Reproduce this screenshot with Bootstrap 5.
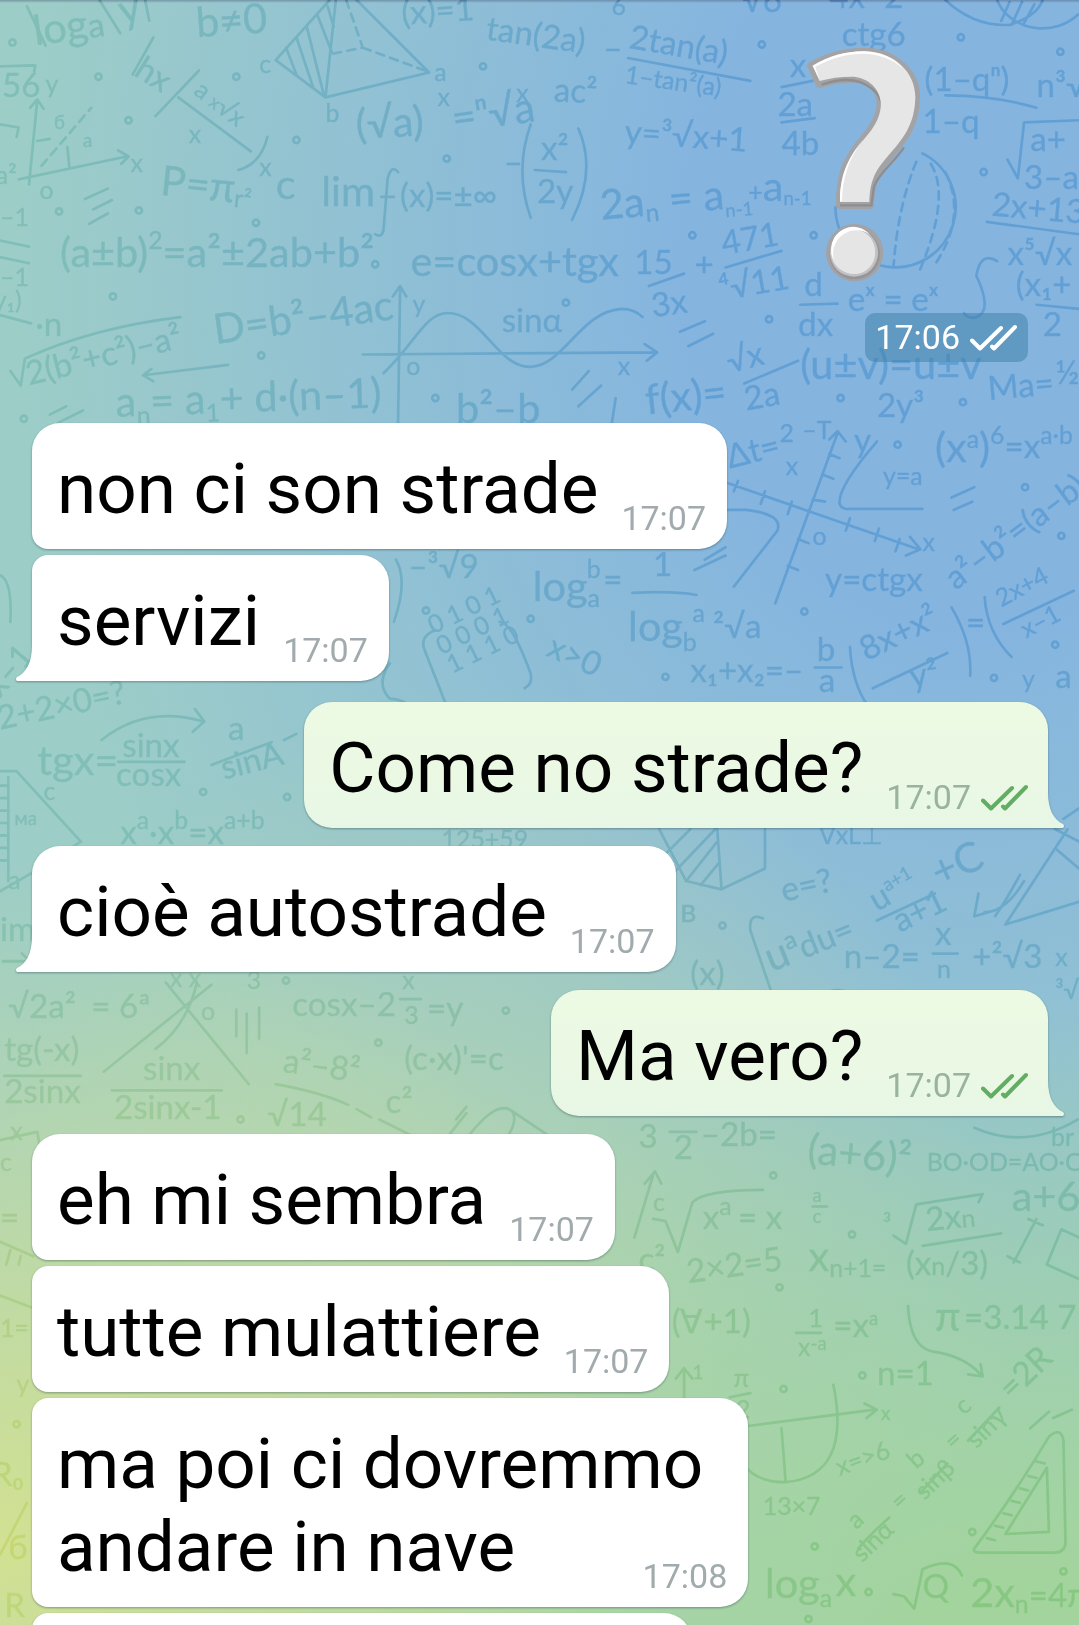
<!DOCTYPE html>
<html lang="it">
<head>
<meta charset="utf-8">
<meta name="viewport" content="width=device-width, initial-scale=1">
<title>Chat</title>
<link href="https://cdn.jsdelivr.net/npm/bootstrap@5.3.0/dist/css/bootstrap.min.css" rel="stylesheet">
<script src="https://cdn.jsdelivr.net/npm/bootstrap@5.3.0/dist/js/bootstrap.bundle.min.js"></script>
<style>
body { font-family: Roboto, "Liberation Sans", sans-serif; color: #000; }
.chat {
  isolation: isolate;
  background:
    linear-gradient(rgba(70,90,120,.45), rgba(70,90,120,0) 3px),
    radial-gradient(ellipse 62% 42% at 0% 95%, rgba(210,225,146,1), rgba(210,225,146,0)),
    radial-gradient(ellipse 80% 42% at 96% 103%, rgba(163,212,158,1) 15%, rgba(163,212,158,0)),
    radial-gradient(ellipse 50% 46% at 45% 88%, rgba(188,217,163,.85), rgba(188,217,163,0)),
    radial-gradient(ellipse 88% 74% at 90% 16%, #85b5df 30%, rgba(133,181,223,0)),
    #9dcdc7;
}
.doodles { z-index: 0; mix-blend-mode: overlay; opacity: .29; pointer-events: none; }
.doodles text { font-family: Lato, "Open Sans", sans-serif; fill: #000; stroke: #000; stroke-width: .4; }
.doodles path, .doodles circle { fill: none; stroke: #000; stroke-width: 2.6; stroke-linecap: round; stroke-linejoin: round; }
.t1 { font-size: 40px; } .t2 { font-size: 32px; } .t3 { font-size: 24px; } .t4 { font-size: 18px; }
.thread { z-index: 1; padding: 30px 31px 0 32px; }
.sticker-msg { margin: 0 20px 61px 0; }
.sticker { width: 248px; height: 283px; }
.time-badge { background: rgba(60,125,165,.5); border-radius: 10px; padding: 4px 10px 5px; color: #fff; }
.bubble { background: #fff; border-radius: 28px; padding: 24px 21px 19px 25px; filter: drop-shadow(0 1px 1px rgba(20,50,60,.4)); max-width: 90%; }
.bubble-out { background: linear-gradient(#edfae3, #e8f7e5); padding-right: 19px; color: #000; }
.join-top { border-top-left-radius: 16px; }
.join-bottom { border-bottom-left-radius: 16px; }
.tail-in { border-bottom-left-radius: 0; }
.tail-out { border-bottom-right-radius: 0; }
.tail { width: 17px; height: 36px; bottom: 0; }
.tail-in .tail { right: 100%; margin-right: -1px; }
.tail-out .tail { left: 100%; margin-left: -1px; }
.words { font-size: 71px; line-height: 83px; }
.stamp { font-size: 34px; line-height: 40px; color: #a1aaad; margin-bottom: -8px; }
.bubble-out .stamp { color: #9ab39c; }
.time-badge .stamp { color: #fff; margin: 0; }
.ticks { width: 48px; height: 27px; fill: none; stroke: #62ad63; stroke-width: 4; stroke-linecap: round; stroke-linejoin: round; }
.time-badge .ticks { stroke: #fff; }
.gap-text { column-gap: 23px; }
.gap-tick { column-gap: 10px; }
.stacked > * { grid-area: 1 / 1; }
.stacked .words { padding-right: 24px; }
.g-near { margin-bottom: 6px; } .g-far { margin-bottom: 18px; } .g-turn { margin-bottom: 21px; }
.next-msg { width: 65%; min-height: 126px; }
</style>
</head>
<body>
<main class="chat position-relative vh-100 overflow-hidden">
<svg class="doodles position-absolute top-0 start-0 w-100 h-100" viewBox="0 0 1041 1568" preserveAspectRatio="xMidYMin slice" aria-hidden="true">
  <!-- formulas -->
  <text class="t1" transform="translate(34 44) rotate(-8)">log<tspan class="t2">a</tspan></text>
  <text class="t1" transform="translate(118 24) rotate(-14)">y</text>
  <text class="t1" transform="translate(190 36) rotate(-4)">b≠0</text>
  <text class="t2" x="2" y="94">56</text><text class="t3" x="44" y="90">y</text>
  <text class="t2" transform="translate(128 72) rotate(32)">hx</text>
  <text class="t3" transform="translate(186 90) rotate(38)">a <tspan class="t4">x</tspan>√x</text>
  <text class="t3" x="182" y="138">x</text>
  <text class="t3" x="250" y="70">c</text><text class="t3" x="314" y="118">b</text><text class="t3" x="419" y="78">a</text>
  <text class="t4" x="52" y="124">б</text><text class="t4" x="80" y="142">a</text><text class="t3" x="126" y="166">x</text><text class="t3" x="38" y="192">o</text>
  <text class="t3" x="-4" y="178">a²</text>
  <text class="t2" transform="translate(388 24) rotate(-4)">(x)=1</text>
  <text class="t2" transform="translate(468 38) rotate(8)">tan(2a)</text><text class="t2" x="582" y="58">–</text>
  <text class="t2" transform="translate(606 46) rotate(10)">2tan(a)</text>
  <text class="t3" transform="translate(602 80) rotate(8)">1–tan²(a)</text>
  <text class="t2" transform="translate(534 98) rotate(2)">ac²</text>
  <text class="t1" transform="translate(344 134) rotate(-3)">(√a)</text><text class="t3" x="422" y="102">x</text>
  <text class="t1" transform="translate(438 128) rotate(-8)">=ⁿ√a</text><text class="t3" x="494" y="98" dx="4">x</text>
  <text class="t2" transform="translate(602 138) rotate(4)">y=³√x+1</text>
  <text class="t2" x="486" y="168">–</text><text class="t2" x="522" y="154">x²</text><text class="t2" x="518" y="196">2y</text>
  <text class="t1" transform="translate(154 188) rotate(6)">P=π<tspan class="t3" dy="4">r²</tspan></text>
  <text class="t3" x="250" y="170">x</text><text class="t1" x="266" y="192">c</text>
  <text class="t1" x="310" y="199">lim</text><text class="t2" x="386" y="200">(x)=±∞</text>
  <text class="t1" transform="translate(580 212) rotate(-5)">2a<tspan class="t3" dy="6">n</tspan><tspan dy="-6"> = a</tspan><tspan class="t4" dy="8">n-1</tspan></text>
  <text class="t1" transform="translate(722 194)"><tspan class="t3">+</tspan>a<tspan class="t4" dy="4">n-1</tspan></text>
  <text class="t1" x="58" y="258">(a±b)<tspan class="t3" dy="-18">2</tspan><tspan dy="18">=a²±2ab+b²</tspan></text>
  <text class="t1" x="396" y="266">e=cosx+tgx</text>
  <text class="t1" transform="translate(208 332) rotate(-8)">D=b²–4ac</text>
  <text class="t2" transform="translate(28 372) rotate(-14)">2(b²+c²)–a²</text>
  <text class="t3" x="0" y="218">–1</text><text class="t3" x="0" y="276">–1</text><text class="t3" x="-6" y="298">y₁)</text><text class="t2" x="34" y="324">·n</text>
  <text class="t1" transform="translate(112 402) rotate(-2)">a<tspan class="t3" dy="8">n</tspan><tspan dy="-8">= a</tspan><tspan class="t3" dy="8">1</tspan><tspan dy="-8">+ d·(n–1)</tspan></text>
  <text class="t3" x="398" y="302">y</text><text class="t3" x="392" y="362">o</text><text class="t3" x="596" y="362">x</text>
  <text class="t2" x="484" y="320">sinα</text>
  <text class="t2" x="612" y="264">15</text><text class="t2" transform="translate(630 306) rotate(-8)">3x</text><text class="t2" x="670" y="266">+</text>
  <text class="t2" transform="translate(698 246) rotate(-10)">471</text><text class="t2" transform="translate(696 290) rotate(-10)">⁴√11</text>
  <text class="t1" x="440" y="408">b²–b</text>
  <text class="t1" transform="translate(624 400) rotate(-6)">f(x)=</text>
  <text class="t2" transform="translate(704 360) rotate(-14)">√x</text><text class="t2" transform="translate(720 396) rotate(-10)">2a</text>
  <text class="t2" x="762" y="74">x</text><text class="t2" x="750" y="112">2a</text><text class="t2" x="754" y="150">4b</text>
  <text class="t2" x="812" y="44">ctg6</text>
  <text class="t3" x="590" y="14">6</text><text class="t2" x="716" y="12">√6</text><text class="t2" x="800" y="8">4x–2</text>
  <text class="t2" x="892" y="88">(1–qⁿ)</text><text class="t2" x="890" y="128">1–q</text><text class="t2" x="1000" y="94">n³√</text>
  <text class="t2" x="994" y="146">a+</text><text class="t2" x="988" y="182">3–a</text>
  <text class="t2" transform="translate(956 208) rotate(5)">2x+13</text><text class="t2" x="972" y="256">x⁵√x</text><text class="t2" x="980" y="286">(x₁+</text><text class="t2" x="1006" y="324">2</text>
  <text class="t2" x="776" y="286">d</text><text class="t2" x="770" y="324">dx</text><text class="t2" x="818" y="300">eˣ = eˣ</text>
  <text class="t1" x="772" y="366">(u±v)=u±v</text><text class="t2" x="846" y="402">2y³</text>
  <text class="t2" transform="translate(954 386) rotate(-5)">Ma=</text><text class="t2" x="1018" y="370">½</text>
  <text class="t2" transform="translate(704 452) rotate(-14)">Δt=</text><text class="t3" x="752" y="426">2</text><text class="t3" x="758" y="458">x</text><text class="t3" x="774" y="424">–T</text>
  <text class="t2" x="824" y="436">y</text><text class="t3" x="784" y="526">o</text><text class="t3" x="890" y="532">x</text>
  <text class="t3" x="852" y="468">y=a</text><text class="t1" x="902" y="446">(x<tspan class="t3" dy="-14">a</tspan><tspan dy="14">)</tspan><tspan class="t3" dy="-18">6</tspan><tspan class="t2" dy="14">=x</tspan><tspan class="t3" dy="-14">a·b</tspan></text>
  <text class="t2" transform="translate(922 570) rotate(-37)">a²–b²=(a–b)</text>
  <text class="t2" x="796" y="570">y=ctgx</text>
  <text class="t1" x="514" y="580">log<tspan class="t3" dy="6">a</tspan></text><text class="t2" x="578" y="570" dx="4">=</text><text class="t3" x="562" y="558" dx="4">b</text><text class="t2" x="630" y="556">1</text>
  <text class="t1" x="606" y="618">log<tspan class="t3" dy="10">b</tspan></text><text class="t3" x="666" y="600" dx="2">a</text><text class="t2" x="688" y="616">²√a</text>
  <text class="t2" transform="translate(526 632) rotate(24)">x&gt;0</text><text class="t2" x="666" y="658">x₁+x₂=–</text><text class="t2" x="788" y="638">b</text><text class="t2" x="790" y="668">a</text>
  <text class="t2" transform="translate(836 638) rotate(-26)">8x+x²</text><text class="t2" transform="translate(880 664) rotate(-10)">y²</text><text class="t2" x="932" y="612">=</text>
  <text class="t3" transform="translate(966 586) rotate(-28)">2x+4</text><text class="t3" transform="translate(990 616) rotate(-28)">x–1</text><text class="t3" x="986" y="664">y</text><text class="t2" x="1018" y="664">a</text>
  <text class="t2" x="394" y="558">–³√9</text>
  <text class="t3" transform="translate(418 612) rotate(-26)">0 1 0 1</text><text class="t3" transform="translate(426 632) rotate(-26)">0 0 0 1</text><text class="t3" transform="translate(436 650) rotate(-26)">1 1 1 0</text>
  <text class="t2" transform="translate(0 704) rotate(-12)">2+2×0=?</text><text class="t2" transform="translate(0 674) rotate(-50)">x–1</text>
  <text class="t1" x="36" y="748">tgx=</text><text class="t2" x="118" y="730">sinx</text><text class="t2" x="112" y="758">cosx</text>
  <text class="t2" x="220" y="714">a</text><text class="t2" transform="translate(216 752) rotate(-14)">sinA</text>
  <text class="t2" x="116" y="814">x<tspan class="t3" dy="-14">a</tspan><tspan dy="14">·x</tspan><tspan class="t3" dy="-14">b</tspan><tspan dy="14">=x</tspan><tspan class="t3" dy="-14">a+b</tspan></text>
  <text class="t4" x="14" y="796">ма</text><text class="t3" x="8" y="858">a</text><text class="t2" x="0" y="908">im</text><text class="t2" x="0" y="938">→</text><text class="t3" x="42" y="772">c</text>
  <text class="t3" x="426" y="818">125+59</text><text class="t3" x="790" y="814">∇xL⊥</text>
  <text class="t2" x="656" y="890">в</text><text class="t2" transform="translate(756 870) rotate(-12)">e=?</text>
  <text class="t1" transform="translate(744 938) rotate(-22)">u<tspan class="t3" dy="-14">a</tspan><tspan class="t2" dy="14">du=</tspan></text><text class="t2" transform="translate(846 880) rotate(-30)">u<tspan class="t4" dy="-12">a+1</tspan></text><text class="t2" transform="translate(868 900) rotate(-26)">a+1</text><text class="t1" transform="translate(906 856) rotate(-24)">+C</text>
  <text class="t2" x="814" y="934">n–2=</text><text class="t2" x="902" y="912">x</text><text class="t3" x="904" y="944">n</text><text class="t2" x="938" y="934">+²√3</text>
  <text class="t2" x="666" y="950">(x)</text><text class="t3" x="1018" y="932">x</text><text class="t3" x="1018" y="964">³√</text>
  <text class="t2" x="8" y="982">√2a²</text><text class="t2" x="84" y="982" dx="4">= 6ª</text>
  <text class="t3" x="194" y="984">o</text><text class="t3" x="238" y="954">3</text><text class="t3" x="164" y="952">x x</text>
  <text class="t2" x="282" y="980">cosx–2</text><text class="t3" x="388" y="954">x</text><text class="t3" x="390" y="988">3</text><text class="t2" x="412" y="984">=y</text>
  <text class="t2" x="4" y="1024">tg(-x)</text><text class="t2" x="4" y="1064">2sinx</text><text class="t2" x="138" y="1042">sinx</text><text class="t2" x="110" y="1080">2sinx-1</text>
  <text class="t2" transform="translate(272 1034) rotate(8)">a²–8²</text><text class="t2" x="390" y="1032">(c·x)'=c</text><text class="t2" x="258" y="1086">√14</text><text class="t2" x="372" y="1074">c²</text>
  <text class="t3" x="10" y="1100">x</text><text class="t3" x="0" y="1130">c</text><text class="t2" x="0" y="1186">=</text>
  <text class="t2" x="616" y="1108">3</text><text class="t2" x="646" y="1118" dx="4">2</text><text class="t2" x="676" y="1106">–2b=</text><text class="t1" transform="translate(778 1122) rotate(6)">(a+6)²</text><text class="t3" x="894" y="1130">BO·OD=AO·O</text><text class="t3" x="1014" y="1106">br</text>
  <text class="t3" x="630" y="1168">c</text><text class="t2" x="678" y="1186">x<tspan class="t3" dy="-14">a </tspan><tspan dy="14">= x</tspan></text><text class="t4" x="784" y="1160">a</text><text class="t4" x="784" y="1180">c</text>
  <text class="t3" x="852" y="1190">³</text><text class="t2" transform="translate(894 1188) rotate(-6)">2x<tspan class="t3">n</tspan></text><text class="t2" x="874" y="1230">(x<tspan class="t3">n</tspan>/3)</text><text class="t1" x="976" y="1168">a+6</text>
  <text class="t2" x="616" y="1226">c²</text><text class="t2" transform="translate(664 1238) rotate(-8)">2×2=5</text><text class="t1" x="780" y="1226">x<tspan class="t3" dy="6">n+1=</tspan></text>
  <text class="t2" x="648" y="1286">(∀+1)</text><text class="t3" x="780" y="1280">1</text><text class="t3" x="770" y="1308">x<tspan class="t4" dy="-6">-a</tspan></text><text class="t2" x="804" y="1290">=x<tspan class="t4" dy="-12">a</tspan></text>
  <text class="t1" x="902" y="1284">π</text><text class="t2" x="930" y="1282">=3.14 7–</text><text class="t2" x="846" y="1336">n=1</text>
  <text class="t3" x="708" y="1338">π</text><text class="t3" x="710" y="1368">2</text><text class="t4" x="850" y="1370">x</text><text class="t4" x="668" y="1330">1</text>
  <text class="t3" transform="translate(810 1424) rotate(-20)">x=&gt;6</text><text class="t3" x="736" y="1462">13×7</text>
  <text class="t3" transform="translate(826 1476) rotate(-42)">a</text><text class="t3" transform="translate(832 1508) rotate(-44)">sinα</text><text class="t3" transform="translate(868 1458) rotate(-42)">=</text><text class="t3" transform="translate(884 1418) rotate(-42)">b</text><text class="t3" transform="translate(892 1448) rotate(-44)">sinβ</text><text class="t3" transform="translate(920 1400) rotate(-42)">=</text><text class="t3" transform="translate(930 1366) rotate(-42)">c</text><text class="t3" transform="translate(942 1398) rotate(-44)">sinγ</text><text class="t2" transform="translate(976 1352) rotate(-44)">=2R</text>
  <text class="t1" x="738" y="1542">log<tspan class="t3" dy="8">a</tspan></text><text class="t1" x="802" y="1540" dx="4">x</text><text class="t2" x="890" y="1542">Q</text><text class="t1" x="936" y="1550">2x<tspan class="t3" dy="6">n</tspan><tspan class="t2" dy="-6">=4π</tspan></text>
  <text class="t3" x="0" y="1290">1=</text><text class="t3" x="16" y="1344">y</text><text class="t2" x="-8" y="1434">R₀</text><text class="t2" x="8" y="1504">б</text><text class="t2" x="4" y="1560">R</text>
  <!-- rules, axes and figures -->
  <path d="M26 6L44 44M96 0L116 32M140 0L144 20M0 64L34 63L33 69M28 178L36 96M29 104L36 96L42 105M18 173L122 151M114 145L124 151L117 158M36 136L48 134M65 142L67 162"/>
  <path d="M148 36L128 72M192 68L150 112M172 94L242 146M258 132Q252 158 230 164M0 120L18 123L16 132M82 192L104 182M90 202L108 193M86 216L104 206M48 400L64 392M56 408L80 396"/>
  <path d="M318 0L266 58L314 94L414 70L344 0M314 94L324 0M276 46L286 72M286 36L302 84M296 26L312 90M306 14L320 50M316 6L322 26"/>
  <path stroke-dasharray="8 6" d="M334 0L350 46L320 52M350 46L410 68M40 160L88 104"/>
  <path d="M606 56L724 78M754 84L784 78M754 118L786 114M516 164L546 166M512 120Q496 165 512 210M558 124Q576 165 552 212M384 166Q378 158 374 172L370 222Q368 230 362 226M368 190H380"/>
  <path d="M0 232L28 238M0 248L28 254M0 304L30 312M10 358L20 372L24 346Q90 316 174 306M220 352L138 362M146 356L138 362L148 368M350 342L632 340M622 332L634 340L624 348M384 410L386 278M379 286L386 276L392 286M370 360C400 332 410 302 432 302C465 302 480 355 512 354C545 352 560 300 600 298Q612 298 620 306"/>
  <path d="M626 276L660 264M700 258L754 242M552 376L568 358M558 392L580 372M590 410L594 384M656 320L680 310M664 334L688 322M718 370L770 348M772 294L808 293M1000 294L1041 298M912 92Q960 92 1000 104M972 154L982 172L988 118L1041 116M952 214L1041 226"/>
  <path d="M962 252Q946 242 942 266Q958 300 942 306Q934 308 930 302M890 148A58 58 0 1 1 806 200M912 0Q940 26 974 24Q1000 16 1006 0M962 0A46 40 0 0 0 1040 14M966 20L974 2M976 24L986 2M988 22L998 4"/>
  <path stroke-dasharray="8 6" d="M884 156Q866 200 862 258M898 158Q918 190 886 264M912 166Q934 210 900 258"/>
  <path d="M702 466L886 530M878 518L888 530L874 536M748 582L808 418M800 424L808 416L816 426M712 464L708 474M738 474L734 486M764 484L760 496M820 500L816 512M848 510L844 522M868 520L864 532M800 438L810 442M794 458L804 462M784 482L796 484M770 520L780 524M760 546L770 550"/>
  <path d="M846 426Q808 470 810 486Q812 492 820 491H890M700 492H720Q756 496 750 512L708 566M918 480L940 470M920 492L938 484M670 550L700 536M680 540L700 528M610 572Q650 570 672 574M786 644L812 644M820 624Q822 660 838 682M842 664L914 630M918 586Q938 620 936 652M950 576Q952 610 976 634M968 602L1036 570"/>
  <path d="M420 608Q404 614 410 628L432 684M482 600Q494 600 512 650Q514 660 506 664M382 540Q394 560 380 600M376 640Q362 660 376 674Q400 676 394 690M0 555Q12 560 10 600M98 714Q140 680 196 696M188 684L197 696L186 706M114 735L178 735M204 738L262 716M274 714L286 708M0 744L16 744L78 812L38 838L0 860M8 750V850"/>
  <path d="M0 758H8M0 770H8M0 782H8M0 794H8M0 806H8M0 818H8M0 830H8M636 800L662 850L696 858L738 838V800M692 800L696 856M640 826L666 800M650 842L690 800M662 850L692 812M676 854L694 832"/>
  <path d="M1030 800L970 892L1041 870M1020 820L1041 838M1018 800L1041 812M984 844Q970 870 960 884M988 850Q970 880 950 880M944 862L940 884L954 880M846 888L902 862M900 920H924M736 886Q722 880 724 898L748 968M790 966Q800 950 820 958L840 962M1026 790L1041 780"/>
  <path d="M100 1034L204 950M160 948L240 1046M190 948Q180 990 150 1012M228 974V1000M238 978V1016M250 972V1002M4 1038H78M108 1052H214M266 1046Q310 1054 336 1066M344 1070L358 1078M366 1080L398 1096M386 964H406M434 1094L450 1074M440 1080L450 1068M452 1096Q480 1060 494 1072Q500 1080 490 1096M494 1072L530 1096"/>
  <path d="M646 1092H672M630 1176L642 1178L654 1208L668 1160Q680 1148 736 1148M784 1164H798M612 1194L630 1134M622 1142L632 1130L638 1142M862 1192L874 1200L884 1162L948 1152L944 1160M890 1202L966 1190M940 1088Q990 1110 1040 1080"/>
  <path d="M876 1260Q878 1300 900 1304Q930 1308 946 1326M934 1326L948 1328L946 1316M768 1286H792M704 1348L724 1344M660 1350V1322M652 1330L660 1320L668 1330M720 1376L844 1360M834 1354L846 1360L836 1368M804 1336Q822 1424 758 1430Q732 1430 720 1416M754 1378L758 1430M828 1494Q840 1480 858 1464M888 1440L914 1412M934 1390L964 1358M1016 1368L1034 1360M994 1378L1012 1362"/>
  <path d="M940 1494Q980 1440 1012 1386Q1024 1376 1026 1390L1028 1490Q1026 1498 1018 1498H946Q938 1498 940 1494ZM970 1480L1010 1416L1012 1478ZM952 1484L960 1486M960 1472L968 1474M968 1460L976 1462M976 1448L984 1450M984 1436L992 1438M992 1424L1000 1426M1000 1410L1008 1412M978 1218L1000 1176M992 1176L1006 1182M972 1212L984 1218M1010 1220L1024 1186L1041 1194M1010 1220L1041 1234M862 1538L872 1540L882 1552L890 1514Q920 1500 928 1520"/>
  <path d="M0 1198L32 1212M0 1250L32 1262M10 1206L6 1220M20 1212L18 1220M0 1100L36 1092L38 1104M0 1500L26 1450"/>
  <g>
    <circle cx="12" cy="41" r="3"/><circle cx="95" cy="74" r="3"/><circle cx="124" cy="116" r="3"/><circle cx="228" cy="74" r="3"/><circle cx="286" cy="135" r="3"/><circle cx="466" cy="64" r="3"/><circle cx="57" cy="204" r="3"/><circle cx="134" cy="203" r="3"/><circle cx="247" cy="215" r="3"/><circle cx="431" cy="153" r="3"/><circle cx="362" cy="255" r="3"/><circle cx="109" cy="286" r="3"/><circle cx="252" cy="343" r="3"/><circle cx="23" cy="404" r="3"/><circle cx="420" cy="384" r="3"/><circle cx="735" cy="43" r="3"/><circle cx="927" cy="36" r="3"/><circle cx="1023" cy="50" r="3"/><circle cx="949" cy="166" r="3"/><circle cx="668" cy="227" r="3"/><circle cx="785" cy="227" r="3"/><circle cx="546" cy="292" r="3"/><circle cx="742" cy="308" r="3"/><circle cx="811" cy="384" r="3"/><circle cx="929" cy="388" r="3"/><circle cx="866" cy="429" r="3"/><circle cx="989" cy="470" r="3"/><circle cx="1024" cy="517" r="3"/><circle cx="776" cy="590" r="3"/><circle cx="642" cy="653" r="3"/><circle cx="959" cy="654" r="3"/><circle cx="1018" cy="622" r="3"/><circle cx="512" cy="597" r="3"/><circle cx="411" cy="589" r="3"/><circle cx="196" cy="764" r="3"/><circle cx="277" cy="769" r="3"/><circle cx="697" cy="893" r="3"/><circle cx="276" cy="946" r="3"/><circle cx="488" cy="975" r="3"/><circle cx="365" cy="1006" r="3"/><circle cx="232" cy="1080" r="3"/><circle cx="746" cy="1134" r="3"/><circle cx="822" cy="1191" r="3"/><circle cx="752" cy="1242" r="3"/><circle cx="832" cy="1327" r="3"/><circle cx="756" cy="1340" r="3"/><circle cx="938" cy="1478" r="3"/><circle cx="786" cy="1492" r="3"/><circle cx="838" cy="1536" r="3"/><circle cx="1026" cy="1516" r="3"/><circle cx="16" cy="1374" r="3"/><circle cx="780" cy="1562" r="3"/>
  </g>
</svg>

<section class="thread position-relative d-flex flex-column align-items-start">
  <article class="sticker-msg align-self-end d-flex flex-column align-items-end">
    <svg class="sticker" viewBox="0 0 744 849" role="img" aria-label="Punto interrogativo">
      <g fill="#a3a3a6" stroke="#a3a3a6" stroke-width="24" stroke-linejoin="round">
        <path d="M94 107C145 77 200 65 255 65C345 66 408 130 408 200C408 285 370 330 325 382C285 428 272 460 270 525H180C178 440 198 390 248 330C288 285 303 250 302 215C297 168 255 146 215 146C180 146 150 152 119 162Z"/>
        <circle cx="224" cy="668" r="74"/>
      </g>
      <path d="M125 164C165 150 208 146 240 156C300 180 318 222 298 264M180 526H274L282 470C296 430 340 400 372 352" fill="none" stroke="#8e8e91" stroke-width="7"/>
      <path d="M98 107C150 77 200 63 255 64C345 66 405 128 406 200C405 285 368 328 322 380C283 425 270 455 268 516H180C180 440 200 390 250 330C290 285 305 250 302 215C297 168 255 140 215 140C180 140 150 144 119 153Z" fill="#e6e6e7"/>
      <path d="M119 151L98 107C150 77 200 63 255 64C310 67 345 88 370 116C336 86 290 70 245 71C195 73 155 84 106 110ZM180 514C180 440 200 388 250 328C203 390 187 450 186 514Z" fill="#fff"/>
      <circle cx="224" cy="672" r="76" fill="#969698"/>
      <circle cx="222" cy="668" r="72" fill="#c2c2c4"/>
      <circle cx="219" cy="664" r="66" fill="#e6e6e7"/>
      <path d="M154 664A66 66 0 0 1 270 614A70 70 0 0 0 162 690Q154 680 154 664Z" fill="#fff"/>
      <circle cx="223" cy="670" r="62" fill="#e5e5e6"/>
    </svg>
    <div class="time-badge d-flex align-items-center gap-tick">
      <time class="stamp">17:06</time>
      <svg class="ticks" viewBox="0 0 48 27" role="img" aria-label="Letto"><path d="M2 16.5L10 24.5L31 4M22 22.5L24 24.5L45 3"/></svg>
    </div>
  </article>

  <article class="bubble join-bottom g-near d-flex align-items-end gap-text"><span class="words">non ci son strade</span><time class="stamp">17:07</time></article>
  <article class="bubble join-top tail-in g-turn position-relative d-flex align-items-end gap-text"><span class="words">servizi</span><time class="stamp">17:07</time>
    <svg class="tail position-absolute" viewBox="0 0 17 36" aria-hidden="true"><path d="M17 0H16C16 18 10 28 1 32Q-1 34 1 36H17Z" fill="#fff"/></svg></article>
  <article class="bubble bubble-out tail-out g-far align-self-end position-relative d-flex align-items-end gap-text"><span class="words">Come no strade?</span>
    <span class="stamp d-flex align-items-center gap-tick"><time>17:07</time><svg class="ticks" viewBox="0 0 48 27" role="img" aria-label="Letto"><path d="M2 16.5L10 24.5L31 4M22 22.5L24 24.5L45 3"/></svg></span>
    <svg class="tail position-absolute" viewBox="0 0 17 36" aria-hidden="true"><path d="M0 0H1C1 18 7 28 16 32Q18 34 16 36H0Z" fill="#e8f7e5"/></svg></article>
  <article class="bubble tail-in g-far position-relative d-flex align-items-end gap-text"><span class="words">cioè autostrade</span><time class="stamp">17:07</time>
    <svg class="tail position-absolute" viewBox="0 0 17 36" aria-hidden="true"><path d="M17 0H16C16 18 10 28 1 32Q-1 34 1 36H17Z" fill="#fff"/></svg></article>
  <article class="bubble bubble-out tail-out g-far align-self-end position-relative d-flex align-items-end gap-text"><span class="words">Ma vero?</span>
    <span class="stamp d-flex align-items-center gap-tick"><time>17:07</time><svg class="ticks" viewBox="0 0 48 27" role="img" aria-label="Letto"><path d="M2 16.5L10 24.5L31 4M22 22.5L24 24.5L45 3"/></svg></span>
    <svg class="tail position-absolute" viewBox="0 0 17 36" aria-hidden="true"><path d="M0 0H1C1 18 7 28 16 32Q18 34 16 36H0Z" fill="#e8f7e5"/></svg></article>
  <article class="bubble join-bottom g-near d-flex align-items-end gap-text"><span class="words">eh mi sembra</span><time class="stamp">17:07</time></article>
  <article class="bubble join-top join-bottom g-near d-flex align-items-end gap-text"><span class="words">tutte mulattiere</span><time class="stamp">17:07</time></article>
  <article class="bubble join-top join-bottom g-near stacked d-grid"><span class="words">ma poi ci dovremmo<br>andare in nave</span><time class="stamp align-self-end ms-auto">17:08</time></article>
  <article class="bubble join-top next-msg"></article>
</section>
</main>
</body>
</html>
